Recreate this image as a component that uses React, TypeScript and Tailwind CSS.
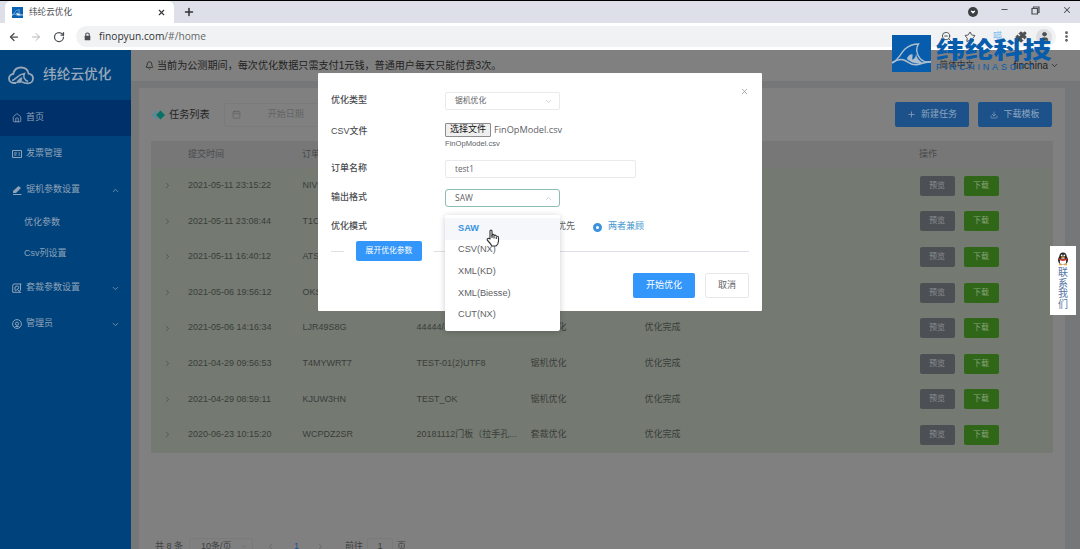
import { useState } from 'react';
import type { ReactNode } from 'react';
import {
    ArrowLeft, ArrowRight, Bell, Calendar, ChevronDown, ChevronLeft, ChevronRight, ChevronUp,
    Download, House, Minus, MoreVertical, Plus, Puzzle, RotateCw, Star, User, X, ZoomOut,
} from 'lucide-react';

const rows = [
    { time: '2021-05-11 23:15:22', order: 'NIV5J2KA', name: 'TEST-04', type: '锯机优化' },
    { time: '2021-05-11 23:08:44', order: 'T1C8PQ4M', name: 'TEST-03', type: '锯机优化' },
    { time: '2021-05-11 16:40:12', order: 'ATS6W3RD', name: 'TEST-02', type: '锯机优化' },
    { time: '2021-05-06 19:56:12', order: 'OKS2M7XE', name: 'TEST-01', type: '锯机优化' },
    { time: '2021-05-06 14:16:34', order: 'LJR49S8G', name: '44444/4', type: '锯机优化' },
    { time: '2021-04-29 09:56:53', order: 'T4MYWRT7', name: 'TEST-01(2)UTF8', type: '锯机优化' },
    { time: '2021-04-29 08:59:11', order: 'KJUW3HN', name: 'TEST_OK', type: '锯机优化' },
    { time: '2020-06-23 10:15:20', order: 'WCPDZ2SR', name: '20181112门板（拉手孔...', type: '套裁优化' },
];

const formats = ['SAW', 'CSV(NX)', 'XML(KD)', 'XML(Biesse)', 'CUT(NX)'];

function Shark({ className }: { className?: string }) {
    return (
        <svg viewBox="0 0 39 37" className={className} fill="none" stroke="currentColor">
            <path d="M0 27.5C6 26 8 19 13 14C17 10.5 22 9 26.5 9C23.5 13 24.5 20 28.5 24C31 26.5 35 27.5 39 26.5" strokeWidth="1.4" />
            <path d="M0 28C5 24.5 9 23.5 13 25.5C18 28 20 31 26 29.5C31 28 34 26.5 39 27" strokeWidth="1.6" />
            <path d="M15 24C16 20.5 18 19 20.5 19.5L20 24.5C22.5 24.5 24 22 24 19.5C24.5 23 27 26 30 27.5C25 29.5 20 28 15 24Z" fill="currentColor" strokeWidth="0.3" />
        </svg>
    );
}

function CloudLogo() {
    return (
        <svg viewBox="0 0 26 19" className="h-[19px] w-[26px]" fill="none" stroke="currentColor">
            <path d="M8 17H6C3 17 1 15 1 12.5C1 10 3 8.2 5.3 8C6 4 9 1.5 13 1.5C17 1.5 20 4 20.6 7.6C23.4 8 25 10 25 12.5C25 15 23 17.3 20 17.3C17 17.3 16 17 14 16" strokeWidth="1.8" />
            <path d="M4 14.5C8 14 9 8.5 16.5 7.5C15 10.5 16 14 20 15.5" strokeWidth="1.5" />
            <path d="M8 17C10 13.5 12 12 14 11.5L13.5 16.5Z" fill="currentColor" strokeWidth="0.5" />
        </svg>
    );
}

function Browser() {
    return (
        <div className="flex h-[50px] shrink-0 flex-col bg-white text-[#4a4d51]">
            <div className="flex h-[23px] border-t border-black bg-[#dde0e8]">
                <div className="ml-[5px] flex w-[169px] items-center rounded-t-md bg-white pr-2 pl-[7px]">
                    <span className="flex h-[11px] w-[11px] items-center justify-center bg-[#0863b5] text-white">
                        <Shark className="h-[11px] w-[11px]" />
                    </span>
                    <span className="ml-[6px] flex-1 text-[8.6px]">纬纶云优化</span>
                    <X className="h-[9px] w-[9px] text-[#333]" strokeWidth={3} />
                </div>
                <Plus className="mt-[5px] ml-[9px] h-[12px] w-[12px] text-[#333]" strokeWidth={3} />
                <div className="flex-1" />
                <div className="mr-[8px] flex items-start gap-[22px] pt-[4px]">
                    <span className="mt-[2px] flex h-[10px] w-[10px] items-center justify-center rounded-full bg-[#3c4043] text-white">
                        <ChevronDown className="h-[6px] w-[6px]" fill="currentColor" strokeWidth={5} />
                    </span>
                    <Minus className="h-[9px] w-[9px]" strokeWidth={2.5} />
                    <svg viewBox="0 0 9 9" className="mt-[1px] h-[9px] w-[9px]" fill="none" stroke="currentColor" strokeWidth="1.2">
                        <path d="M1 2.5H6.5V8H1ZM2.5 2.5V1H8V6.5H6.5" />
                    </svg>
                    <X className="h-[10px] w-[10px]" strokeWidth={2.5} />
                </div>
            </div>
            <div className="flex flex-1 items-center pl-[8px]">
                <ArrowLeft className="h-[12px] w-[12px] shrink-0" strokeWidth={2.5} />
                <ArrowRight className="ml-[10px] h-[12px] w-[12px] shrink-0 text-[#b3b5b8]" strokeWidth={2} />
                <RotateCw className="ml-[11px] h-[12px] w-[12px] shrink-0" strokeWidth={2.5} />
                <div className="ml-[11px] flex h-[21px] w-[980px] shrink-0 items-center rounded-full bg-[#f0f2f4] pl-[8px]">
                    <svg viewBox="0 0 8 10" className="h-[9px] w-[7px]">
                        <path d="M2 4.5V3Q2 1 4 1T6 3V4.5" fill="none" stroke="currentColor" strokeWidth="1.2" />
                        <rect x="0.8" y="4" width="6.4" height="5.4" rx="0.7" fill="currentColor" />
                    </svg>
                    <span className="ml-[8px] flex-1 font-['Open_Sans',sans-serif] text-[10.2px] text-[#333]">
                        finopyun.com<span className="text-[#666]">/#/home</span>
                    </span>
                    <ZoomOut className="h-[11px] w-[11px]" />
                    <Star className="mr-[17px] ml-[12px] h-[12px] w-[12px]" />
                    <span className="mr-[13px] text-[9px] text-[#74b5ed]">喵</span>
                    <Puzzle className="mr-[29px] h-[12px] w-[12px]" fill="currentColor" />
                </div>
                <span className="-ml-[20px] flex h-[16px] w-[16px] shrink-0 items-center justify-center rounded-full bg-[#dcdee1]">
                    <User className="h-[11px] w-[11px]" fill="currentColor" />
                </span>
                <MoreVertical className="ml-[8px] h-[13px] w-[13px] shrink-0" strokeWidth={3} />
            </div>
        </div>
    );
}

function MenuItem({ icon, label, arrow, active }: { icon: ReactNode; label: string; arrow?: ReactNode; active?: boolean }) {
    return (
        <div className={`flex h-[36px] items-center pr-[11px] pl-[12px] text-[9px] ${active ? 'bg-[#003069]' : ''}`}>
            {icon}
            <span className="ml-[4px] flex-1">{label}</span>
            {arrow}
        </div>
    );
}

function Sidebar() {
    return (
        <aside className="w-[131px] shrink-0 bg-[#00427c] text-[#8fa2b8]">
            <div className="flex h-[50px] items-center pl-[8px] text-[#98a8ba]">
                <CloudLogo />
                <span className="ml-[9px] text-[13.7px] font-medium">纬纶云优化</span>
            </div>
            <MenuItem active icon={<House className="h-[10px] w-[10px]" />} label="首页" />
            <MenuItem
                icon={
                    <svg viewBox="0 0 10 10" className="h-[10px] w-[10px]" fill="none" stroke="currentColor">
                        <path d="M0.5 1.5H9.5V8.5H0.5ZM2 4H5M2 6H4.5M6.5 4H8M6.5 6H8" />
                    </svg>
                }
                label="发票管理"
            />
            <MenuItem
                icon={
                    <svg viewBox="0 0 10 10" className="h-[10px] w-[10px]" fill="currentColor">
                        <path d="M1 6L6.5 1L9 3L4 8H1ZM1 9H9.5V10H1Z" />
                    </svg>
                }
                label="锯机参数设置"
                arrow={<ChevronUp className="h-[9px] w-[9px]" />}
            />
            <div className="flex h-[30px] items-center pl-[24px] text-[9px]">优化参数</div>
            <div className="flex h-[32px] items-center pl-[24px] text-[9px]">Csv列设置</div>
            <MenuItem
                icon={
                    <svg viewBox="0 0 10 10" className="h-[10px] w-[10px]" fill="none" stroke="currentColor">
                        <path d="M9.5 1H2Q0.7 1 0.7 3V9.3H9M8.5 1V7L7 9M3 7Q2 3 5 3T6 6L3 8M5.5 6.5L8 9" />
                    </svg>
                }
                label="套裁参数设置"
                arrow={<ChevronDown className="h-[9px] w-[9px]" />}
            />
            <MenuItem
                icon={
                    <svg viewBox="0 0 10 10" className="h-[10px] w-[10px]" fill="none" stroke="currentColor">
                        <circle cx="5" cy="5" r="4.4" />
                        <circle cx="5" cy="4.7" r="1.6" />
                        <path d="M3.3 7.5H6.7" />
                    </svg>
                }
                label="管理员"
                arrow={<ChevronDown className="h-[9px] w-[9px]" />}
            />
        </aside>
    );
}

function TaskTable() {
    return (
        <div className="mx-[12px] bg-[#747a72] text-[9px] text-[#3a3d3a]">
            <div className="flex h-[27px] items-center bg-[#777777] pl-[37px] text-[#484a4c]">
                <span className="w-[114px]">提交时间</span>
                <span className="w-[114px]">订单号</span>
                <span className="w-[114px]">订单名称</span>
                <span className="w-[114px]">优化类型</span>
                <span className="w-[275px]">状态</span>
                <span>操作</span>
            </div>
            {rows.map((row) => (
                <div key={row.time} className="flex h-[35.6px] items-center pl-[12px]">
                    <ChevronRight className="mr-[16px] h-[9px] w-[9px]" strokeWidth={1.5} />
                    <span className="w-[114.5px]">{row.time}</span>
                    <span className="w-[114px]">{row.order}</span>
                    <span className="w-[114px] whitespace-nowrap">{row.name}</span>
                    <span className="w-[114px]">{row.type}</span>
                    <span className="w-[275px]">优化完成</span>
                    <span className="flex h-[20px] w-[35px] items-center justify-center rounded-[2px] bg-[#4c5054] text-[8px] text-[#8b8e91]">预览</span>
                    <span className="ml-[9px] flex h-[20px] w-[35px] items-center justify-center rounded-[2px] bg-[#2f6617] text-[8px] text-[#8aa37d]">下载</span>
                </div>
            ))}
        </div>
    );
}

function Main() {
    return (
        <main className="flex flex-1 flex-col bg-[#757779]">
            <div className="flex h-[31px] shrink-0 items-center bg-[#808080] pl-[14px] text-[10.1px] text-[#222]">
                <Bell className="mr-[3px] h-[9px] w-[9px]" />
                <span className="flex-1">当前为公测期间，每次优化数据只需支付1元钱，普通用户每天只能付费3次。</span>
                <span className="w-[74px] text-[8.6px] text-[#333]">简体中文</span>
                <span className="text-[10px]">finchina</span>
                <ChevronDown className="mr-[21px] ml-[2px] h-[9px] w-[9px]" />
            </div>
            <div className="mt-[7px] mr-[15px] ml-[8px] flex flex-1 flex-col bg-[#808080]">
                <div className="flex h-[53px] shrink-0 items-center pr-[13px] pl-[12px]">
                    <svg viewBox="0 0 15 10" className="h-[10px] w-[15px]">
                        <path d="M6 1L2 5L6 9" fill="none" stroke="#3e8fb0" strokeWidth="1.3" />
                        <path d="M9.5 0.5L14 5L9.5 9.5L5 5Z" fill="#067262" />
                    </svg>
                    <span className="ml-[3px] text-[10.2px] text-[#242424]">任务列表</span>
                    <div className="ml-[14px] flex h-[24px] w-[180px] items-center rounded-[2px] border border-[#7a7a7a] pl-[7px] text-[9px] text-[#626466]">
                        <Calendar className="h-[9px] w-[9px]" />
                        <span className="ml-[27px]">开始日期</span>
                    </div>
                    <div className="flex-1" />
                    <button className="flex h-[25px] w-[74px] items-center justify-center gap-[5px] rounded-[2px] bg-[#1d518a] text-[9px] text-[#8ea6bf]">
                        <Plus className="h-[9px] w-[9px]" />新建任务
                    </button>
                    <button className="ml-[9px] flex h-[25px] w-[74px] items-center justify-center gap-[5px] rounded-[2px] bg-[#1d518a] text-[9px] text-[#8ea6bf]">
                        <Download className="h-[8px] w-[8px]" />下载模板
                    </button>
                </div>
                <TaskTable />
                <div className="mt-[84px] ml-[16px] flex h-[20px] items-center text-[9px] whitespace-nowrap text-[#3e4042]">
                    <span className="w-[34px]">共 8 条</span>
                    <span className="flex h-[18px] w-[64px] items-center justify-between rounded-[2px] border border-[#7a7a7a] pr-[5px] pl-[11px]">
                        10条/页<ChevronDown className="h-[7px] w-[7px] text-[#666]" />
                    </span>
                    <ChevronLeft className="ml-[13px] h-[9px] w-[9px] text-[#626262]" />
                    <span className="ml-[19px] text-[#1d518a]">1</span>
                    <ChevronRight className="ml-[17px] h-[9px] w-[9px] text-[#626262]" />
                    <span className="ml-[20px]">前往</span>
                    <span className="ml-[4px] flex h-[18px] w-[26px] items-center justify-center rounded-[2px] border border-[#7a7a7a]">1</span>
                    <span className="ml-[4px]">页</span>
                </div>
            </div>
        </main>
    );
}

function Field({ label, children }: { label: string; children: ReactNode }) {
    return (
        <div className="flex items-center">
            <span className="w-[114px] shrink-0 text-[9px] font-medium text-[#4a4c50]">{label}</span>
            {children}
        </div>
    );
}

function TaskDialog() {
    const [format, setFormat] = useState('SAW');

    return (
        <div className="absolute top-[73px] left-[318px] h-[238px] w-[444px] rounded-[1px] bg-white pt-[19px] pr-[13px] pl-[13px] text-[9px] text-[#606266]">
            <X className="absolute top-[14px] right-[13px] h-[9px] w-[9px] text-[#888]" strokeWidth={1.8} />
            <Field label="优化类型">
                <div className="flex h-[18px] w-[115px] items-center justify-between rounded-[2px] border border-[#e8eaed] pr-[6px] pl-[9px] text-[7.8px]">
                    锯机优化<ChevronDown className="h-[9px] w-[9px] text-[#c0c4cc]" />
                </div>
            </Field>
            <div className="mt-[13px] flex h-[37px] items-start">
                <span className="mt-[2px] w-[114px] shrink-0 font-medium text-[#4a4c50]">CSV文件</span>
                <div>
                    <div className="flex items-center">
                        <span className="flex h-[14px] w-[46px] items-center justify-center rounded-[1px] border border-[#8c8c8c] bg-[#efefef] text-[9px] text-[#111]">选择文件</span>
                        <span className="ml-[3px] font-['Open_Sans',sans-serif] text-[9.2px] leading-[14px]">FinOpModel.csv</span>
                    </div>
                    <div className="text-[7.6px] leading-[13px]">FinOpModel.csv</div>
                </div>
            </div>
            <Field label="订单名称">
                <div className="flex h-[18px] w-[191px] items-center rounded-[2px] border border-[#e8eaed] pl-[9px] font-['Open_Sans',sans-serif] text-[8.1px]">test1</div>
            </Field>
            <div className="mt-[11px]">
                <Field label="输出格式">
                    <div className="flex h-[18px] w-[115px] items-center justify-between rounded-[3px] border border-[#8dbcb3] pr-[6px] pl-[9px] font-['Open_Sans',sans-serif] text-[8.5px]">
                        {format}<ChevronUp className="h-[9px] w-[9px] text-[#c0c4cc]" />
                    </div>
                </Field>
            </div>
            <div className="mt-[13px] flex h-[14px] items-center">
                <span className="w-[114px] font-medium text-[#4a4c50]">优化模式</span>
                <span className="flex w-[130px] justify-end gap-[10px]">
                    <span>优先</span>
                </span>
                <span className="ml-[18px] h-[9px] w-[9px] rounded-full border-[3px] border-[#3b93df] bg-white" />
                <span className="ml-[6px] text-[#4799cf]">两者兼顾</span>
            </div>
            <div className="mt-[7px] flex h-[20px] items-center">
                <span className="h-px w-[13px] bg-[#dcdfe6]" />
                <button className="mx-[12px] h-[20px] w-[66px] rounded-[2px] bg-[#3396fa] text-[7.8px] text-white">展开优化参数</button>
                <span className="h-px flex-1 bg-[#dcdfe6]" />
            </div>
            <div className="mt-[12px] flex justify-end gap-[10px]">
                <button className="h-[25px] w-[62px] rounded-[2px] bg-[#3396fa] text-[9px] text-white">开始优化</button>
                <button className="h-[25px] w-[44px] rounded-[2px] border border-[#e6e8eb] bg-white text-[9px]">取消</button>
            </div>

            {/* Format dropdown */}
            <div className="absolute top-[142px] left-[127px] h-[116px] w-[115px] rounded-[2px] bg-white pt-[3px] text-[9.2px] shadow-[0_1px_6px_rgba(0,0,0,0.2)]">
                {formats.map((item) => (
                    <div
                        key={item}
                        onClick={() => setFormat(item)}
                        className={`flex h-[21.6px] cursor-pointer items-center pl-[13px] ${item === format ? 'bg-[#f5f7fa] font-bold text-[#3994e3]' : ''}`}
                    >
                        {item}
                    </div>
                ))}
            </div>
        </div>
    );
}

function Watermark() {
    return (
        <div className="absolute top-[35px] left-[892px] flex text-[#075cab]">
            <div className="h-[37px] w-[39px] bg-[#075cab] text-[#aebfcf]">
                <Shark className="h-[37px] w-[39px]" />
            </div>
            <div className="ml-[5px] w-[118px]">
                <div className="mt-[1px] origin-center scale-y-80 text-[29px] leading-[28px] font-black tracking-[-0.2px] whitespace-nowrap">纬纶科技</div>
                <div className="-mt-[1px] font-['Liberation_Sans',sans-serif] text-[9px] leading-[9px] tracking-[2.8px] whitespace-nowrap">FINCHINASOFT</div>
            </div>
        </div>
    );
}

function ContactTab() {
    return (
        <div className="absolute top-[246px] left-[1050px] flex h-[69px] w-[26px] flex-col items-center bg-white pt-[6px] text-[10px] leading-[10.5px] text-[#5475a6]">
            <svg viewBox="0 0 12 14" className="mb-[2px] h-[14px] w-[12px]">
                <ellipse cx="6" cy="8" rx="5" ry="5" fill="#262626" />
                <ellipse cx="6" cy="4.5" rx="3.6" ry="4" fill="#262626" />
                <ellipse cx="6" cy="9.5" rx="3.2" ry="3.2" fill="#fff" />
                <circle cx="4.7" cy="3.4" r="0.9" fill="#fff" />
                <circle cx="7.3" cy="3.4" r="0.9" fill="#fff" />
                <ellipse cx="6" cy="5.2" rx="2" ry="0.7" fill="#e8a33a" />
                <path d="M2 7Q6 9 10 7" fill="none" stroke="#c9352b" strokeWidth="1.8" />
                <path d="M2 12.5H5M7 12.5H10" stroke="#e8a33a" strokeWidth="1.4" />
            </svg>
            {'联系我们'.split('').map((char) => (
                <span key={char}>{char}</span>
            ))}
        </div>
    );
}

export default function App() {
    return (
        <div className="relative flex h-[549px] w-[1080px] flex-col overflow-hidden font-['Liberation_Sans','Noto_Sans_CJK_SC',sans-serif]">
            <Browser />
            <div className="flex min-h-0 flex-1">
                <Sidebar />
                <Main />
            </div>
            <TaskDialog />
            <ContactTab />
            <Watermark />
            {/* Hand pointer */}
            <svg viewBox="0 0 14 18" className="absolute top-[229px] left-[486px] h-[18px] w-[14px]" fill="white" stroke="#333" strokeWidth="1.1" strokeLinejoin="round">
                <path d="M4 10V2Q4 1 5 1T6 2V7V5.5Q8 5 8 6.5Q10 5.5 10.3 7.3Q12.5 6.7 12.5 9V12Q12.5 15 10 17H6Q4 14 1.2 11Q1 9 3 9.5Z" />
                <path d="M6 6V9M8 7V9.5M10.3 8V10" fill="none" />
            </svg>
        </div>
    );
}
